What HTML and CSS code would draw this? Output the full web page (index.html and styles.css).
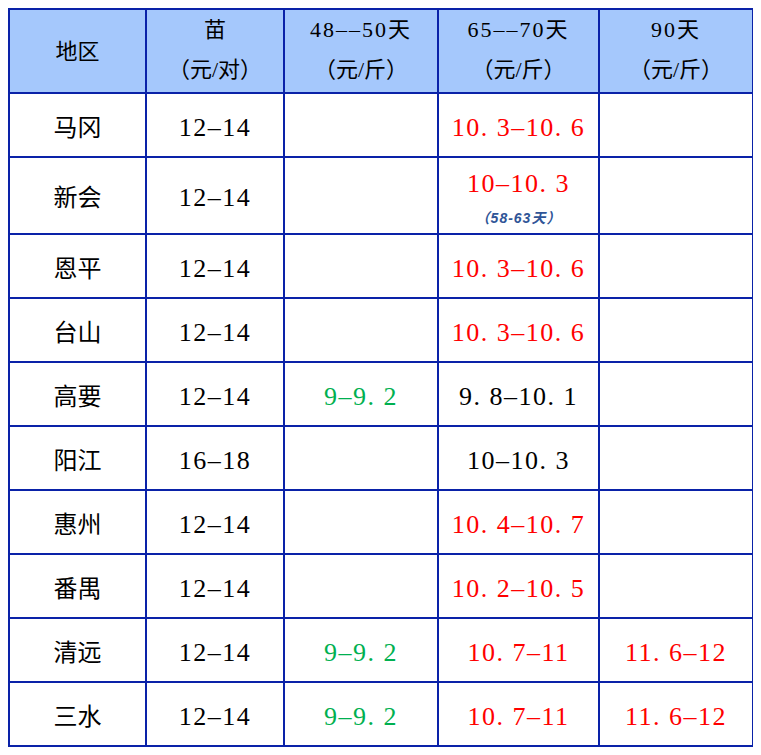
FILE: index.html
```html
<!DOCTYPE html>
<html lang="zh">
<head>
<meta charset="utf-8">
<title>价格表</title>
<link rel="stylesheet" href="styles.css">
</head>
<body>
<table class="price">
  <colgroup>
    <col class="c-area"><col class="c-seed"><col class="c-d50"><col class="c-d70"><col class="c-d90">
  </colgroup>
  <thead>
    <tr class="head">
      <th>地区</th>
      <th><span class="ln">苗</span><span class="ln">（元/对）</span></th>
      <th><span class="ln num">48––50天</span><span class="ln">（元/斤）</span></th>
      <th><span class="ln num">65––70天</span><span class="ln">（元/斤）</span></th>
      <th><span class="ln num">90天</span><span class="ln">（元/斤）</span></th>
    </tr>
  </thead>
  <tbody>
    <tr><td class="area">马冈</td><td>12–14</td><td></td><td class="red">10. 3–10. 6</td><td></td></tr>
    <tr class="tall"><td class="area">新会</td><td>12–14</td><td></td><td class="red stack"><span class="main">10–10. 3</span><span class="note">（58-63天）</span></td><td></td></tr>
    <tr><td class="area">恩平</td><td>12–14</td><td></td><td class="red">10. 3–10. 6</td><td></td></tr>
    <tr><td class="area">台山</td><td>12–14</td><td></td><td class="red">10. 3–10. 6</td><td></td></tr>
    <tr><td class="area">高要</td><td>12–14</td><td class="green">9–9. 2</td><td>9. 8–10. 1</td><td></td></tr>
    <tr><td class="area">阳江</td><td>16–18</td><td></td><td>10–10. 3</td><td></td></tr>
    <tr><td class="area">惠州</td><td>12–14</td><td></td><td class="red">10. 4–10. 7</td><td></td></tr>
    <tr><td class="area">番禺</td><td>12–14</td><td></td><td class="red">10. 2–10. 5</td><td></td></tr>
    <tr><td class="area">清远</td><td>12–14</td><td class="green">9–9. 2</td><td class="red">10. 7–11</td><td class="red">11. 6–12</td></tr>
    <tr><td class="area">三水</td><td>12–14</td><td class="green">9–9. 2</td><td class="red">10. 7–11</td><td class="red">11. 6–12</td></tr>
  </tbody>
</table>
</body>
</html>
```

FILE: styles.css
```css
body {
  margin: 8px;
  background: #ffffff;
}

.price {
  border-collapse: collapse;
  table-layout: fixed;
  width: 744px;
  font-family: "Liberation Serif", "Noto Sans CJK SC", serif;
  color: #000000;
}

.c-area { width: 137px; }
.c-seed { width: 138px; }
.c-d50 { width: 154px; }
.c-d70 { width: 161px; }
.c-d90 { width: 154px; }

.price th,
.price td {
  border: 2px solid #0a22a8;
  padding: 0;
  text-align: center;
  vertical-align: middle;
}

.head {
  height: 84px;
}

.head th {
  background: #a5c8fc;
  font-weight: normal;
  font-size: 22px;
  line-height: 40px;
  padding-bottom: 2px;
}

.head th:first-child {
  padding-bottom: 0;
  padding-top: 2px;
}

.ln {
  display: block;
}

.num {
  letter-spacing: 2px;
}

.price tbody tr {
  height: 64px;
}

.price tbody tr.tall {
  height: 77px;
}

.price td {
  font-size: 26px;
  line-height: 30px;
  letter-spacing: 1.5px;
  padding-top: 5px;
}

.price td.area {
  font-size: 24px;
  letter-spacing: 0;
}

.red { color: #ff0000; }
.green { color: #00b050; }

.stack .main {
  display: block;
  line-height: 30px;
}

.stack .note {
  display: block;
  margin-top: 10px;
  font-family: "Liberation Sans", "Noto Sans CJK SC", sans-serif;
  font-style: italic;
  font-weight: bold;
  font-size: 14px;
  line-height: 18px;
  letter-spacing: 1px;
  color: #2f5597;
}
```
